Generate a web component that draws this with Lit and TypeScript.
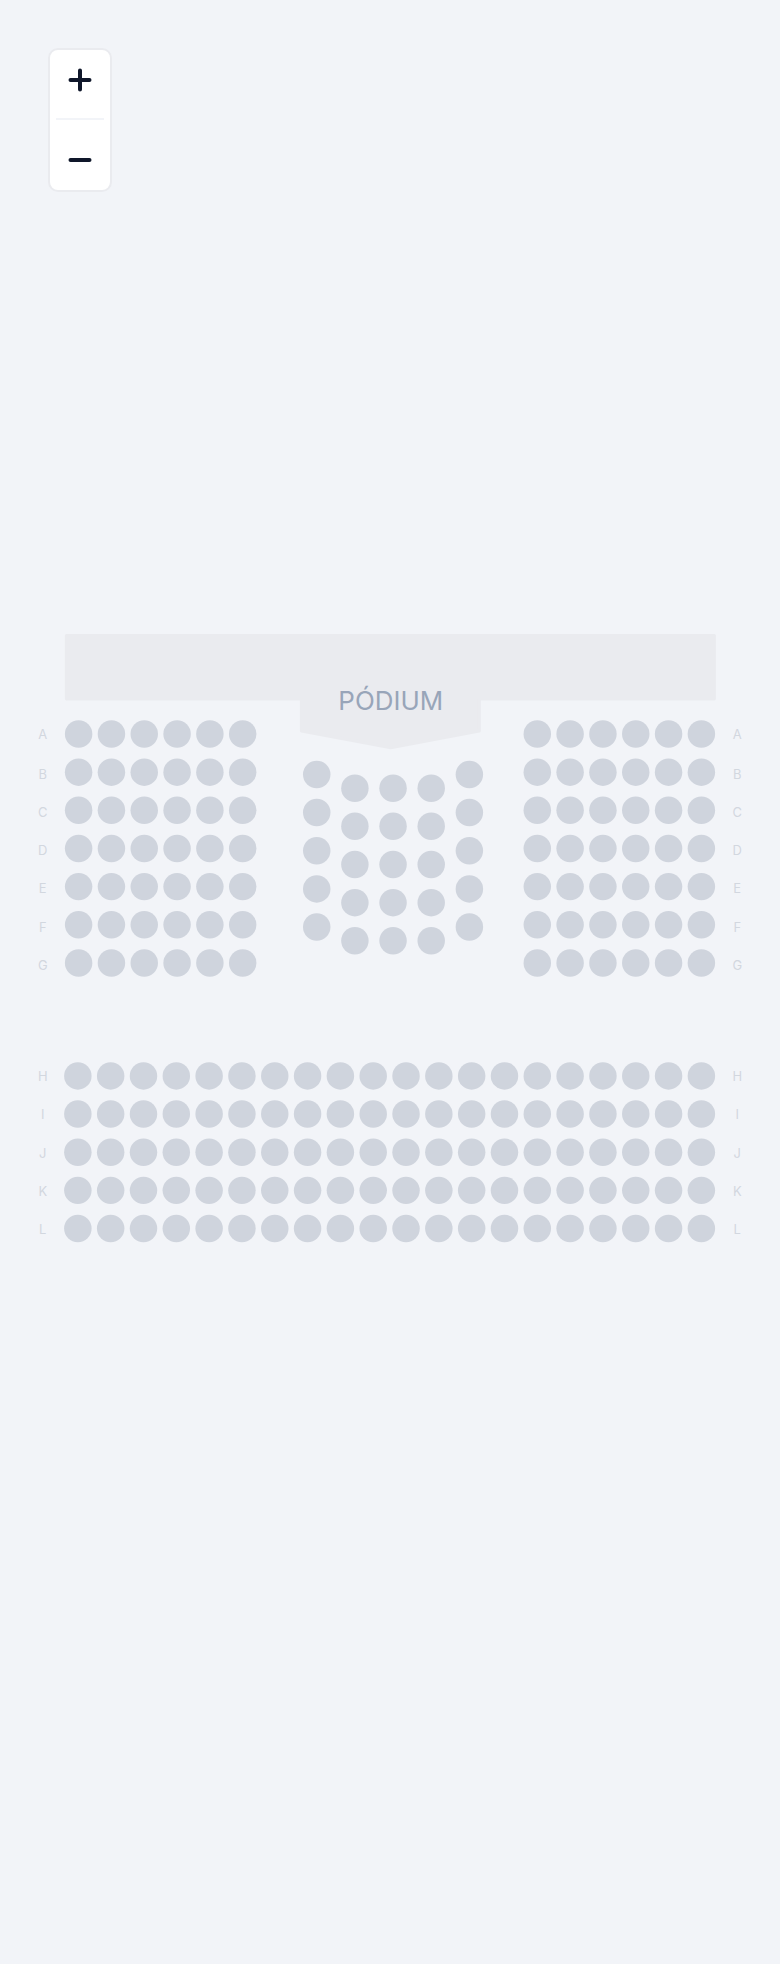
import { LitElement, html, svg, css } from "lit";
import { customElement, state } from "lit/decorators.js";

interface Block {
  x: number;
  y: number;
  cols: number;
  rows: number;
  step: number;
}

const SEAT_RADIUS = 18;
const ROW_STEP = 50;

const BLOCKS: Block[] = [
  { x: 103, y: 131, cols: 6, rows: 7, step: 43 },
  { x: 704, y: 131, cols: 6, rows: 7, step: 43 },
  { x: 415, y: 184, cols: 1, rows: 5, step: 50 },
  { x: 465, y: 202, cols: 3, rows: 5, step: 50 },
  { x: 615, y: 184, cols: 1, rows: 5, step: 50 },
  { x: 102, y: 579, cols: 20, rows: 5, step: 43 },
];

const ROW_LABELS: Array<[string, number]> = [
  ["A", 138],
  ["B", 190],
  ["C", 240],
  ["D", 290],
  ["E", 340],
  ["F", 390],
  ["G", 440],
  ["H", 586],
  ["I", 636],
  ["J", 686],
  ["K", 736],
  ["L", 786],
];

const range = (n: number) => Array.from({ length: n }, (_, i) => i);

@customElement("seat-map")
export class SeatMap extends LitElement {
  static styles = css`
    :host {
      display: block;
    }
    .map {
      display: block;
      width: 100%;
      height: auto;
      font-family: Inter, "Liberation Sans", sans-serif;
      text-anchor: middle;
    }
    .stage {
      fill: #eaebef;
      stroke: #eaebef;
      stroke-width: 4;
      stroke-linejoin: round;
    }
    .stage-label {
      fill: #98a5b9;
      font-size: 34px;
    }
    .seat {
      fill: #cfd4dd;
    }
    .row-label {
      fill: #d2d7df;
      font-size: 17px;
    }
  `;

  private renderBlock(b: Block) {
    return svg`<g>${range(b.rows).map((r) =>
      range(b.cols).map(
        (c) => svg`<circle class="seat" cx=${b.x + c * b.step} cy=${b.y + r * ROW_STEP} r=${SEAT_RADIUS}></circle>`
      )
    )}</g>`;
  }

  render() {
    return html`
      <svg class="map" viewBox="0 0 1022 913" role="group" aria-label="PÓDIUM">
        <path class="stage" d="M87 2H936V85H628V127L512 149L395 127V85H87Z"></path>
        <text class="stage-label" x="512" y="100">PÓDIUM</text>
        ${BLOCKS.map((b) => this.renderBlock(b))}
        ${ROW_LABELS.map(
          ([name, y]) => svg`
            <text class="row-label" x="56" y=${y}>${name}</text>
            <text class="row-label" x="966" y=${y}>${name}</text>`
        )}
      </svg>
    `;
  }
}

@customElement("app-root")
export class AppRoot extends LitElement {
  static styles = css`
    :host {
      display: block;
      position: relative;
      background: #f2f4f8;
    }
    .viewport {
      display: grid;
      align-content: center;
      min-height: 100vh;
      overflow: hidden;
    }
    .zoom {
      position: absolute;
      top: 48px;
      left: 48px;
      display: flex;
      flex-direction: column;
      border: 2px solid #eaebef;
      border-radius: 10px;
      background: #fff;
    }
    .zoom-button {
      display: grid;
      place-items: center;
      width: 60px;
      height: 60px;
      padding: 0;
      border: 0;
      border-radius: 8px;
      background: none;
      color: #0f172a;
      cursor: pointer;
    }
    .divider {
      height: 2px;
      margin: 8px 6px 10px;
      background: #f2f4f8;
    }
    .icon {
      width: 24px;
      height: 24px;
      fill: none;
      stroke: currentColor;
      stroke-width: 4;
      stroke-linecap: round;
    }
  `;

  @state() private zoom = 1;

  private zoomBy(delta: number) {
    this.zoom = Math.min(3, Math.max(1, this.zoom + delta));
  }

  render() {
    return html`
      <main class="viewport">
        <seat-map style="width: ${this.zoom * 100}%"></seat-map>
      </main>
      <div class="zoom">
        <button class="zoom-button" type="button" aria-label="+" @click=${() => this.zoomBy(0.5)}>
          <svg class="icon" viewBox="0 0 24 24" aria-hidden="true"><path d="M2.5 12H21.5M12 2.5V21.5"></path></svg>
        </button>
        <div class="divider"></div>
        <button class="zoom-button" type="button" aria-label="−" @click=${() => this.zoomBy(-0.5)}>
          <svg class="icon" viewBox="0 0 24 24" aria-hidden="true"><path d="M2.5 12H21.5"></path></svg>
        </button>
      </div>
    `;
  }
}
